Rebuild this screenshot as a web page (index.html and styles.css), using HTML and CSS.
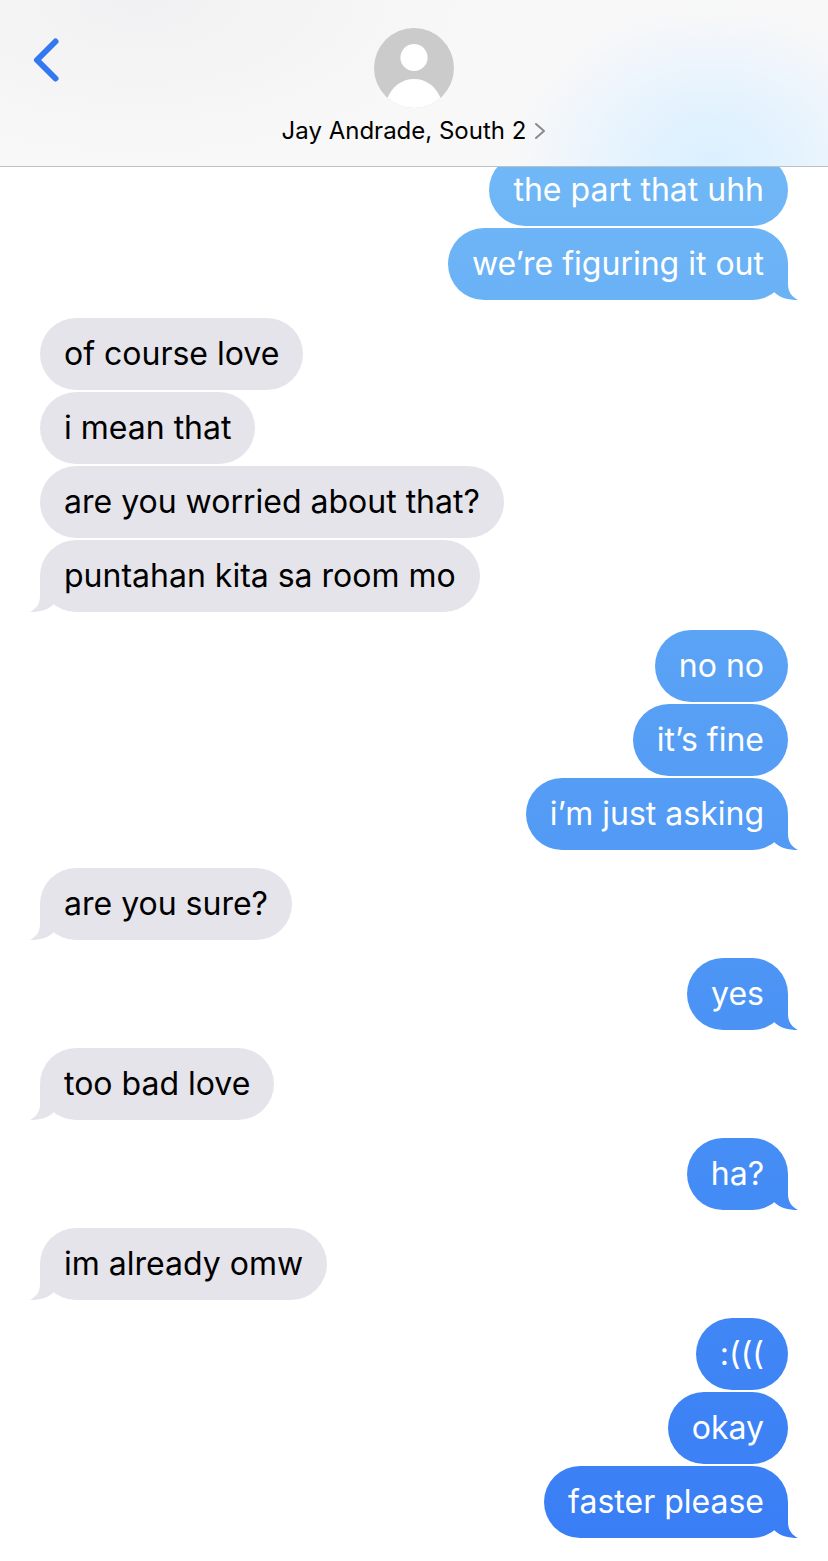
FILE: index.html
```
<!DOCTYPE html>
<html lang="en">
  <head>
    <meta charset="UTF-8" />
    <meta name="viewport" content="width=device-width, initial-scale=1.0" />
    <title>Messages</title>
    <link rel="stylesheet" href="styles.css">
  </head>
  <body>
    <header class="topbar">
      <button type="button" class="back" aria-label="Back">
        <svg width="28" height="46" viewBox="0 0 28 46"><path d="M23.500 4.500 L5 23 L23.500 41.500" /></svg>
      </button>
      <a href="#" class="contact">
        <svg class="avatar" width="80" height="80" viewBox="0 0 80 80">
          <clipPath id="round"><circle cx="40" cy="40" r="40" /></clipPath>
          <g clip-path="url(#round)">
            <rect width="80" height="80" fill="#cbcbcb" />
            <circle cx="40" cy="29.500" r="13.600" fill="#fff" />
            <path d="M13 71 C18 58 28 51 40 51 C52 51 62 58 67 71 L67 80 L13 80 Z" fill="#fff" />
          </g>
        </svg>
        <span class="name">Jay Andrade, South 2
          <svg width="12" height="18" viewBox="0 0 12 18"><path d="M2 2 L10 9 L2 16" /></svg>
        </span>
      </a>
    </header>
    <main class="chat">
      <div class="group sent">
        <p>the part that uhh</p>
        <p class="tail">we’re figuring it out</p>
      </div>
      <div class="group received">
        <p>of course love</p>
        <p>i mean that</p>
        <p>are you worried about that?</p>
        <p class="tail">puntahan kita sa room mo</p>
      </div>
      <div class="group sent">
        <p>no no</p>
        <p>it’s fine</p>
        <p class="tail">i’m just asking</p>
      </div>
      <div class="group received">
        <p class="tail">are you sure?</p>
      </div>
      <div class="group sent">
        <p class="tail">yes</p>
      </div>
      <div class="group received">
        <p class="tail">too bad love</p>
      </div>
      <div class="group sent">
        <p class="tail">ha?</p>
      </div>
      <div class="group received">
        <p class="tail">im already omw</p>
      </div>
      <div class="group sent">
        <p>:(((</p>
        <p>okay</p>
        <p class="tail">faster please</p>
      </div>
    </main>
  </body>
</html>
```
FILE: styles.css
```
* {
  box-sizing: border-box;
}
body {
  margin: 0;
  background: #ffffff;
  font-family: Inter, "Liberation Sans", sans-serif;
  color: #000000;
}
.topbar {
  position: relative;
  z-index: 1;
  display: grid;
  grid-template-columns: 1fr auto 1fr;
  align-items: start;
  padding: 28px 32px 20px;
  border-bottom: 1px solid #bfc0c2;
  background:
    radial-gradient(ellipse 200px 160px at 86% 100%, #daf0ff 0%, #e2f2fe 35%, #eef5fc 68%, rgba(248, 248, 249, 0) 100%),
    radial-gradient(ellipse 330px 160px at 17% 0, #f1f1f3 0%, #f5f5f5 60%, rgba(248, 248, 248, 0) 100%),
    #f8f8f8;
}
.back {
  justify-self: start;
  margin-top: 9px;
  padding: 0;
  border: 0;
  background: none;
}
.back svg {
  display: block;
}
.back path {
  fill: none;
  stroke: #3478f1;
  stroke-width: 6;
  stroke-linecap: round;
  stroke-linejoin: round;
}
.contact {
  display: flex;
  flex-direction: column;
  align-items: center;
  gap: 8px;
  color: #000000;
  text-decoration: none;
}
.name {
  display: flex;
  align-items: center;
  gap: 8px;
  font-size: 24px;
  line-height: 30px;
}
.name path {
  fill: none;
  stroke: #8a8a8e;
  stroke-width: 2;
  stroke-linecap: round;
  stroke-linejoin: round;
}
/* first bubble is scrolled partly under the bar */
.chat {
  display: flex;
  flex-direction: column;
  gap: 18px;
  margin-top: -13px;
  padding: 0 40px 23px;
}
.group {
  display: flex;
  flex-direction: column;
  align-items: flex-start;
  gap: 2px;
}
.sent {
  align-items: flex-end;
}
.group p {
  position: relative;
  margin: 0;
  padding: 15px 24px;
  border-radius: 36px;
  background: #e5e4ea;
  font-size: 32px;
  line-height: 42px;
}
.group.sent p,
.sent .tail::after {
  background: linear-gradient(#70b8f6 10%, #5aa2f5 42%, #4790f5 70%, #397df5 100%) fixed;
}
.group.sent p {
  color: #ffffff;
}
.tail::after {
  content: "";
  position: absolute;
  right: -10px;
  bottom: 0;
  width: 38px;
  height: 36px;
  background: #e5e4ea;
  clip-path: path("M28 0 V20 C28 28 32 33 38 36 C28 36 20 34 14 28 L8 20 L18 0 Z");
}
.received .tail::after {
  right: auto;
  left: -10px;
  transform: scaleX(-1);
}
```
